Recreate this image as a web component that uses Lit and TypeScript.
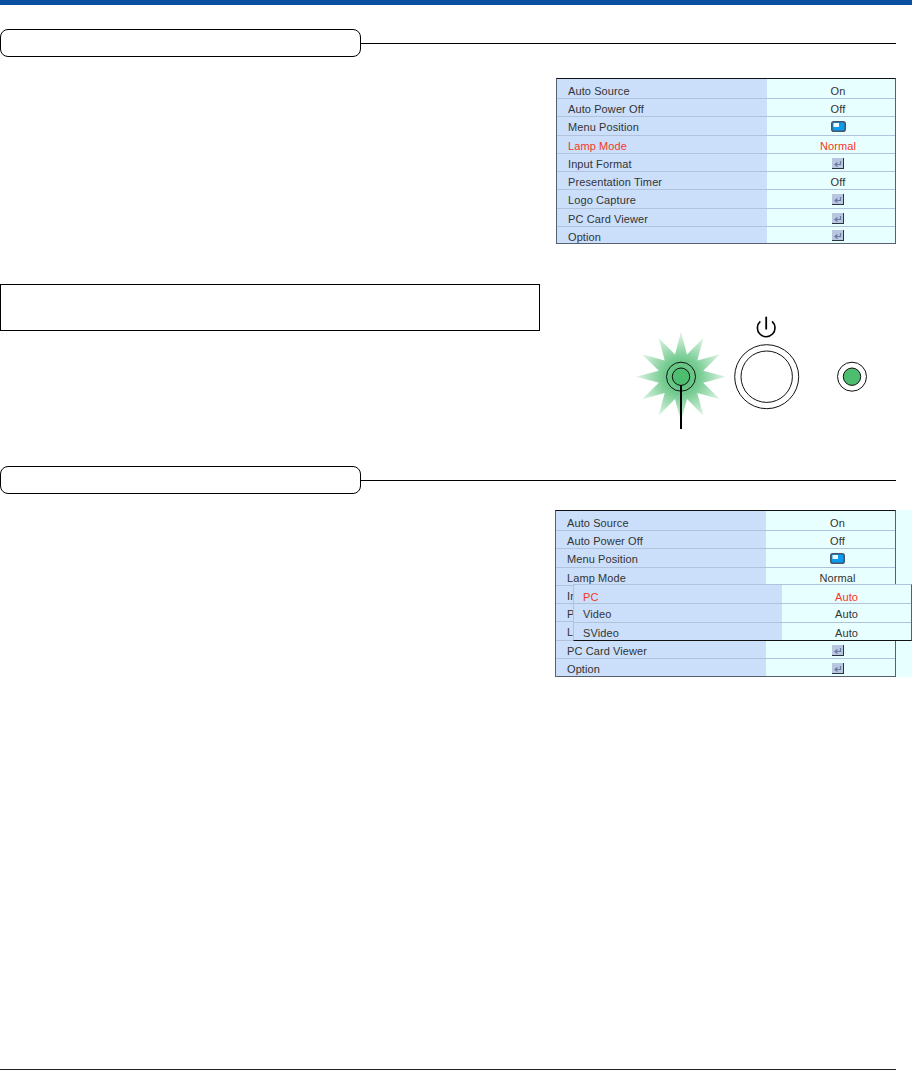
import { LitElement, html, css, svg } from "lit";
import { customElement } from "lit/decorators.js";

type Row = { l: string; v?: string; icon?: "menu" | "enter"; red?: boolean };

const rowsA: Row[] = [
  { l: "Auto Source", v: "On" },
  { l: "Auto Power Off", v: "Off" },
  { l: "Menu Position", icon: "menu" },
  { l: "Lamp Mode", v: "Normal", red: true },
  { l: "Input Format", icon: "enter" },
  { l: "Presentation Timer", v: "Off" },
  { l: "Logo Capture", icon: "enter" },
  { l: "PC Card Viewer", icon: "enter" },
  { l: "Option", icon: "enter" },
];
const rowsB: Row[] = [
  { l: "Auto Source", v: "On" },
  { l: "Auto Power Off", v: "Off" },
  { l: "Menu Position", icon: "menu" },
  { l: "Lamp Mode", v: "Normal" },
  { l: "Ir" },
  { l: "P" },
  { l: "L" },
  { l: "PC Card Viewer", icon: "enter" },
  { l: "Option", icon: "enter" },
];
const sub: Row[] = [
  { l: "PC", v: "Auto", red: true },
  { l: "Video", v: "Auto" },
  { l: "SVideo", v: "Auto" },
];

const menuIcon = svg`<svg class="ic" width="15" height="11" viewBox="0 0 15 11"><rect x="0.8" y="0.8" width="13.4" height="9.4" rx="2" fill="#0a9cf0" stroke="#46566a" stroke-width="1.6"/><rect x="2.5" y="2" width="5.5" height="4" fill="#eef8ff"/></svg>`;
const enterIcon = svg`<svg class="ic" width="12" height="11" viewBox="0 0 12 11"><rect x="0" y="0" width="11" height="10.5" fill="#b8c6e0"/><path d="M11.5 0V11M0 10.5H11" stroke="#2c3444" stroke-width="1"/><path d="M8.5 3V6.5H3.5M5.5 4.5L3 6.5L5.5 8.5" fill="none" stroke="#6a7aa0" stroke-width="1.2"/></svg>`;

const points = Array.from({ length: 24 }, (_, i) => {
  const r = i % 2 === 0 ? 45 : 23;
  const a = (i * Math.PI) / 12 - Math.PI / 2;
  return `${(50 + r * Math.cos(a)).toFixed(1)},${(66.7 + r * Math.sin(a)).toFixed(1)}`;
}).join(" ");

@customElement("app-root")
export class AppRoot extends LitElement {
  static styles = css`
    :host { display: block; width: 912px; height: 1070px; background: #fff; font-family: "Liberation Sans", Arial, sans-serif; overflow: hidden; }
    .page { display: flex; flex-direction: column; height: 1070px; box-sizing: border-box; border-top: 5px solid #0a50a0; position: relative; }
    .head { display: flex; align-items: center; margin-top: 24px; width: 896px; height: 28px; }
    .head.flush { margin-top: 0; }
    .pill { width: 361px; height: 28px; box-sizing: border-box; border: 1px solid #000; border-radius: 8px; flex: none; }
    .rule { flex: 1; height: 1px; background: #000; margin-top: 1px; }
    .menu { width: 340px; box-sizing: border-box; border: 1px solid #56606e; border-top-color: #111; background: #e8ffff; position: relative; }
    .row { display: grid; grid-template-columns: 210px 1fr; height: 18.25px; font-size: 11px; color: #333; letter-spacing: 0.1px; overflow: hidden; }
    .row:first-child { height: 19px; }
    .row:last-child { height: 17.25px; }
    .row + .row .l, .row + .row .v { box-shadow: inset 0 1px 0 #b0c2dc; }
    .l, .v { padding-top: 3px; line-height: 16px; box-sizing: border-box; }
    .row:first-child .l, .row:first-child .v { padding-top: 3.5px; }
    .l { background: #cbdffb; padding-left: 11px; white-space: nowrap; overflow: hidden; }
    .v { background: #e8ffff; display: flex; align-items: center; justify-content: center; padding-left: 14px; }
    .red { color: #f8361c; }
    .ic { display: block; }
    .top { display: flex; justify-content: flex-end; width: 896px; margin-top: 21px; }
    .mid { display: flex; height: 222px; }
    .note { width: 540px; height: 47px; box-sizing: border-box; border: 1px solid #000; margin-top: 40px; flex: none; }
    .panel { margin-left: 91px; margin-top: 66px; display: block; flex: none; }
    .second { display: flex; margin-top: 16px; margin-left: 555px; background: #e8ffff; width: 357px; }
    .second .menu { width: 341px; }
    .popup { position: absolute; left: 17px; top: 73px; width: 339px; box-sizing: border-box; border-top: 1px solid #b0c2dc; border-left: 1px solid #b0c2dc; border-bottom: 1px solid #111; border-right: 1px solid #56606e; background: #e8ffff; }
    .popup .row { grid-template-columns: 208px 1fr; height: 18.25px; }
    .popup .row:first-child { height: 18.25px; }
    .popup .row:last-child { height: 18px; }
    .popup .l { padding-left: 9px; }
    .popup .v { padding-left: 0; }
    .foot { position: absolute; left: 0; width: 896px; bottom: 0; height: 1px; background: #222; }
  `;

  private row(r: Row) {
    return html`<div class="row ${r.red ? "red" : ""}">
      <div class="l">${r.l}</div>
      <div class="v">${r.icon === "menu" ? menuIcon : r.icon === "enter" ? enterIcon : r.v ?? ""}</div>
    </div>`;
  }

  render() {
    return html`<div class="page">
      <div class="head"><div class="pill"></div><div class="rule"></div></div>
      <div class="top"><div class="menu">${rowsA.map((r) => this.row(r))}</div></div>
      <div class="mid">
        <div class="note"></div>
        <svg class="panel" width="260" height="125" viewBox="0 0 260 125">
          <defs>
            <radialGradient id="g" cx="50%" cy="50%" r="50%">
              <stop offset="0%" stop-color="#4dbd70"/>
              <stop offset="40%" stop-color="#74cb90"/>
              <stop offset="100%" stop-color="#e2f5e8"/>
            </radialGradient>
          </defs>
          <polygon points="${points}" fill="url(#g)"/>
          <circle cx="50" cy="66.7" r="14.5" fill="none" stroke="#111" stroke-width="1"/>
          <circle cx="50" cy="66.7" r="8.7" fill="#4dbd70" stroke="#111" stroke-width="1"/>
          <path d="M50 75V119" stroke="#000" stroke-width="2"/>
          <circle cx="135.7" cy="66.7" r="32" fill="#fff" stroke="#111" stroke-width="1"/>
          <circle cx="135.7" cy="66.7" r="25.7" fill="#fff" stroke="#111" stroke-width="1"/>
          <path d="M129.3 11.4A8.8 8.8 0 1 0 141.1 11.4" fill="none" stroke="#000" stroke-width="1.6"/>
          <path d="M135.2 6.7V19.5" stroke="#000" stroke-width="1.8"/>
          <circle cx="221" cy="66.7" r="14.5" fill="#fff" stroke="#111" stroke-width="1"/>
          <circle cx="221" cy="66.7" r="8.7" fill="#4dbd70" stroke="#111" stroke-width="1"/>
        </svg>
      </div>
      <div class="head flush"><div class="pill"></div><div class="rule"></div></div>
      <div class="second">
        <div class="menu">
          ${rowsB.map((r) => this.row(r))}
          <div class="popup">${sub.map((r) => this.row(r))}</div>
        </div>
      </div>
      <div class="foot"></div>
    </div>`;
  }
}
